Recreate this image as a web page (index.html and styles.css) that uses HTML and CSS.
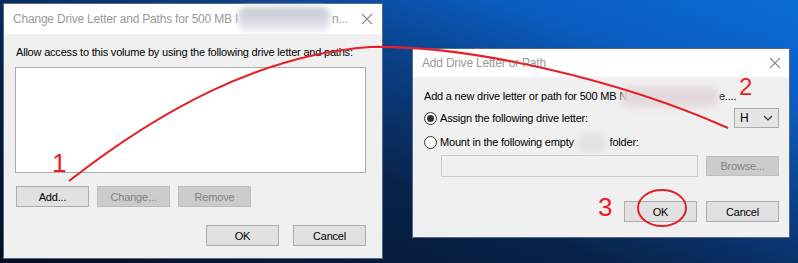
FILE: index.html
```html
<!DOCTYPE html>
<html>
<head>
<meta charset="utf-8">
<link rel="stylesheet" href="styles.css">
</head>
<body>
<div class="desktop">
  <div class="win win-left">
    <div class="titlebar">
      <span class="title">Change Drive Letter and Paths for 500 MB I</span><span class="smudge smudge-title"></span><span class="title">n...</span>
      <svg class="close" width="12" height="12" viewBox="0 0 12 12"><path d="M1 1L11 11M11 1L1 11" stroke="#8a8a8a" stroke-width="1.1" fill="none"/></svg>
    </div>
    <div class="body body-left">
      <p class="label">Allow access to this volume by using the following drive letter and paths:</p>
      <div class="listbox"></div>
      <div class="btnrow">
        <button class="btn">Add...</button>
        <button class="btn disabled">Change...</button>
        <button class="btn disabled">Remove</button>
      </div>
      <div class="btnrow end end-left">
        <button class="btn">OK</button>
        <button class="btn">Cancel</button>
      </div>
    </div>
  </div>

  <div class="win win-right">
    <div class="titlebar titlebar-right">
      <span class="title">Add Drive Letter or Path</span>
      <svg class="close" width="12" height="12" viewBox="0 0 12 12"><path d="M1 1L11 11M11 1L1 11" stroke="#8a8a8a" stroke-width="1.1" fill="none"/></svg>
    </div>
    <div class="body body-right">
      <p class="label">Add a new drive letter or path for 500 MB N<span class="smudge smudge-line"></span>e....</p>
      <div class="optrow">
        <span class="radio checked"></span>
        <span class="optlabel">Assign the following drive letter:</span>
        <div class="combo"><span>H</span><svg width="10" height="6" viewBox="0 0 10 6"><path d="M1 1L5 5L9 1" stroke="#333" stroke-width="1.1" fill="none"/></svg></div>
      </div>
      <div class="optrow optrow2">
        <span class="radio"></span>
        <span class="optlabel">Mount in the following empty <span class="smudge smudge-ntfs"></span> folder:</span>
      </div>
      <div class="pathrow">
        <div class="textbox"></div>
        <button class="btn disabled browse">Browse...</button>
      </div>
      <div class="btnrow end end-right">
        <button class="btn">OK</button>
        <button class="btn">Cancel</button>
      </div>
    </div>
  </div>

  <svg class="annot" width="798" height="263" viewBox="0 0 798 263">
    <path d="M69 181 C160 110, 260 55, 370 47 C470 45, 620 80, 728 128" stroke="#e6202a" stroke-width="2.2" fill="none"/>
    <ellipse cx="662" cy="208" rx="24" ry="18" stroke="#e6202a" stroke-width="2" fill="none"/>
    <text x="52" y="172" class="num">1</text>
    <text x="739" y="95" class="num num2">2</text>
    <text x="598" y="216" class="num">3</text>
  </svg>
</div>
</body>
</html>
```

FILE: styles.css
```css
* { box-sizing: border-box; }
html, body { margin: 0; padding: 0; }
body {
  width: 798px;
  height: 263px;
  overflow: hidden;
  font-family: "Liberation Sans", Arial, sans-serif;
  font-size: 11px;
  letter-spacing: -0.2px;
  color: #000;
}
.desktop {
  position: relative;
  width: 798px;
  height: 263px;
  background: linear-gradient(20deg, #040e20 0%, #08234a 40%, #0a3f85 62%, #0a5cbf 80%, #0b6cd6 100%);
  overflow: hidden;
}
.win {
  position: absolute;
  background: #f0f0f0;
  border: 1px solid #56688a;
  display: flex;
  flex-direction: column;
}
.win-left { left: 3px; top: 3px; width: 380px; height: 256px; }
.win-right { left: 412px; top: 48px; width: 378px; height: 190px; }

.titlebar {
  height: 30px;
  background: #fff;
  display: flex;
  align-items: center;
  padding-left: 9px;
  position: relative;
  white-space: nowrap;
  font-size: 12px;
}
.titlebar-right { height: 28px; }
.title { color: #9a9a9a; }
.close { position: absolute; right: 9px; top: 9px; }
.titlebar-right .close { top: 8px; right: 8px; }

.smudge { display: inline-block; filter: blur(3px); }
.smudge-title {
  width: 92px; height: 24px; margin: 0 2px 0 0;
  background: linear-gradient(180deg, #c4c9d1 0%, #d3d7dd 45%, #eceef1 100%);
  border-radius: 8px;
}
.smudge-line {
  width: 98px; height: 22px; vertical-align: middle; margin: -6px 0 -6px -6px;
  background: #e4dadd;
  border-radius: 10px;
}
.smudge-ntfs {
  width: 30px; height: 18px; vertical-align: middle; margin: -4px 0;
  background: #e2e2e2;
  border-radius: 9px;
}

.body { flex: 1; display: flex; flex-direction: column; }
.body-left { padding: 11px 16px 0 11px; }
.body-right { padding: 12px 10px 0 10px; }
.label { margin: 0 0 0 1px; line-height: 15px; white-space: nowrap; }

.listbox {
  margin-top: 7px;
  height: 106px;
  background: #fff;
  border: 1px solid #abadb3;
}

.btnrow { display: flex; gap: 8px; margin-top: 13px; padding-left: 1px; }
.btnrow.end { justify-content: flex-end; }
.end-left { margin-top: 18px; gap: 14px; padding-right: 0; }
.end-right { margin-top: 24px; gap: 9px; }

.btn {
  width: 73px;
  height: 21px;
  padding: 0;
  background: #e1e1e1;
  border: 1px solid #adadad;
  font-family: inherit;
  font-size: 11px;
  letter-spacing: -0.2px;
  color: #000;
}
.btn.disabled { background: #cccccc; border-color: #bfbfbf; color: #838383; }

.optrow {
  display: flex;
  align-items: center;
  height: 20px;
  margin-top: 4px;
}
.optrow2 { margin-top: 4px; }
.radio {
  width: 13px; height: 13px;
  border: 1px solid #333;
  border-radius: 50%;
  background: #fff;
  display: flex; align-items: center; justify-content: center;
  margin-left: 1px;
}
.radio.checked::after {
  content: "";
  width: 7px; height: 7px;
  border-radius: 50%;
  background: #333;
}
.optlabel { margin-left: 3px; white-space: nowrap; }
.combo {
  margin-left: auto;
  width: 45px; height: 20px;
  background: #e5e5e5;
  border: 1px solid #adadad;
  display: flex;
  align-items: center;
  justify-content: space-between;
  padding: 0 5px 0 5px;
  font-size: 12px;
}
.pathrow {
  display: flex;
  align-items: center;
  gap: 8px;
  margin-top: 3px;
  padding-left: 18px;
}
.textbox {
  width: 257px; height: 22px;
  background: #f0f0f0;
  border: 1px solid #cccccc;
}
.browse { height: 20px; }

.annot { position: absolute; left: 0; top: 0; pointer-events: none; }
.num { font-family: "Liberation Sans", Arial, sans-serif; font-size: 26px; fill: #ee1c25; letter-spacing: 0; }
.num2 { font-size: 24px; }
```
